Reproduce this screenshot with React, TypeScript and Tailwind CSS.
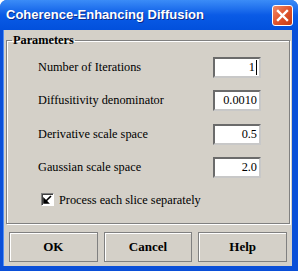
import React from "react";

type Param = {
  label: string;
  value: string;
  caret?: boolean;
};

const params: Param[] = [
  { label: "Number of Iterations", value: "1", caret: true },
  { label: "Diffusitivity denominator", value: "0.0010" },
  { label: "Derivative scale space", value: "0.5" },
  { label: "Gaussian scale space", value: "2.0" },
];

const serif = "font-['Liberation_Serif','Times_New_Roman',serif]";

const CloseButton = () => (
  <div className="w-[21px] h-[21px] rounded-[3px] border border-white bg-gradient-to-br from-[#f08a68] via-[#e0542c] to-[#c23a14] flex items-center justify-center">
    <svg width="13" height="13" viewBox="0 0 13 13">
      <path
        d="M2 2 L11 11 M11 2 L2 11"
        stroke="#fff"
        strokeWidth="2.4"
        strokeLinecap="square"
      />
    </svg>
  </div>
);

const ParamRow = ({ label, value, caret }: Param) => (
  <div className="flex items-center justify-between h-[20px] pl-[31px] pr-[28px]">
    <span className={`${serif} text-[12.3px] text-black`}>{label}</span>
    <div className="w-[48px] h-[21px] bg-white border-2 border-t-[#6b6b6b] border-l-[#6b6b6b] border-b-[#c8c8c8] border-r-[#c8c8c8] flex items-center justify-end pr-[2px]">
      <span className={`${serif} text-[12.3px] text-black leading-none`}>
        {value}
      </span>
      {caret && <span className="w-px h-[15px] bg-black ml-[1px]" />}
    </div>
  </div>
);

const DialogButton = ({ children }: { children: React.ReactNode }) => (
  <button
    className={`${serif} flex-1 h-[30px] border border-[#808080] shadow-[inset_1px_1px_0_#fff] bg-[#d4d0c8] text-[13px] font-bold text-black flex items-center justify-center`}
  >
    {children}
  </button>
);

export default function App() {
  return (
    <div className="w-[298px] h-[271px] flex flex-col bg-[#0a4fd8] rounded-t-[7px] overflow-hidden">
      <div className="h-[30px] shrink-0 flex items-center justify-between pl-[6px] pr-[5px] bg-gradient-to-b from-[#3b8cf7] via-[#0a5be6] to-[#0250dc]">
        <span className="font-['Liberation_Sans',Arial,sans-serif] font-bold text-[13px] text-white [text-shadow:1px_1px_0_#0b2a8a]">
          Coherence-Enhancing Diffusion
        </span>
        <CloseButton />
      </div>

      <div className="flex-1 flex flex-col ml-[3px] mr-[6px] mb-[5px] bg-[#d4d0c8] border-l border-[#4f8df5]">
        <fieldset className="mx-[2px] mt-[3px] h-[191px] border border-[#808080] shadow-[inset_1px_1px_0_#fff,1px_1px_0_#fff] flex flex-col">
          <legend className={`${serif} ml-[5px] px-[1px] text-[12.3px] font-bold text-black leading-[14px]`}>
            Parameters
          </legend>
          <div className="flex flex-col gap-[13.5px] mt-[10px]">
            {params.map((p) => (
              <ParamRow key={p.label} {...p} />
            ))}
          </div>
          <div className="flex items-center gap-[5px] pl-[34px] mt-[13px]">
            <div className="w-[13px] h-[13px] bg-white border border-t-[#808080] border-l-[#808080] border-b-[#ffffff] border-r-[#ffffff] shadow-[inset_1px_1px_0_#404040] flex items-center justify-center">
              <svg width="9" height="9" viewBox="0 0 9 9">
                <path d="M1 4 L1 8 L5 8 Z M1 8 L8 1" stroke="#000" strokeWidth="1.6" fill="#000" />
              </svg>
            </div>
            <span className={`${serif} text-[12.3px] text-black`}>
              Process each slice separately
            </span>
          </div>
        </fieldset>

        <div className="flex gap-[6px] px-[5px] mt-[8px]">
          <DialogButton>OK</DialogButton>
          <DialogButton>Cancel</DialogButton>
          <DialogButton>Help</DialogButton>
        </div>
      </div>
    </div>
  );
}
